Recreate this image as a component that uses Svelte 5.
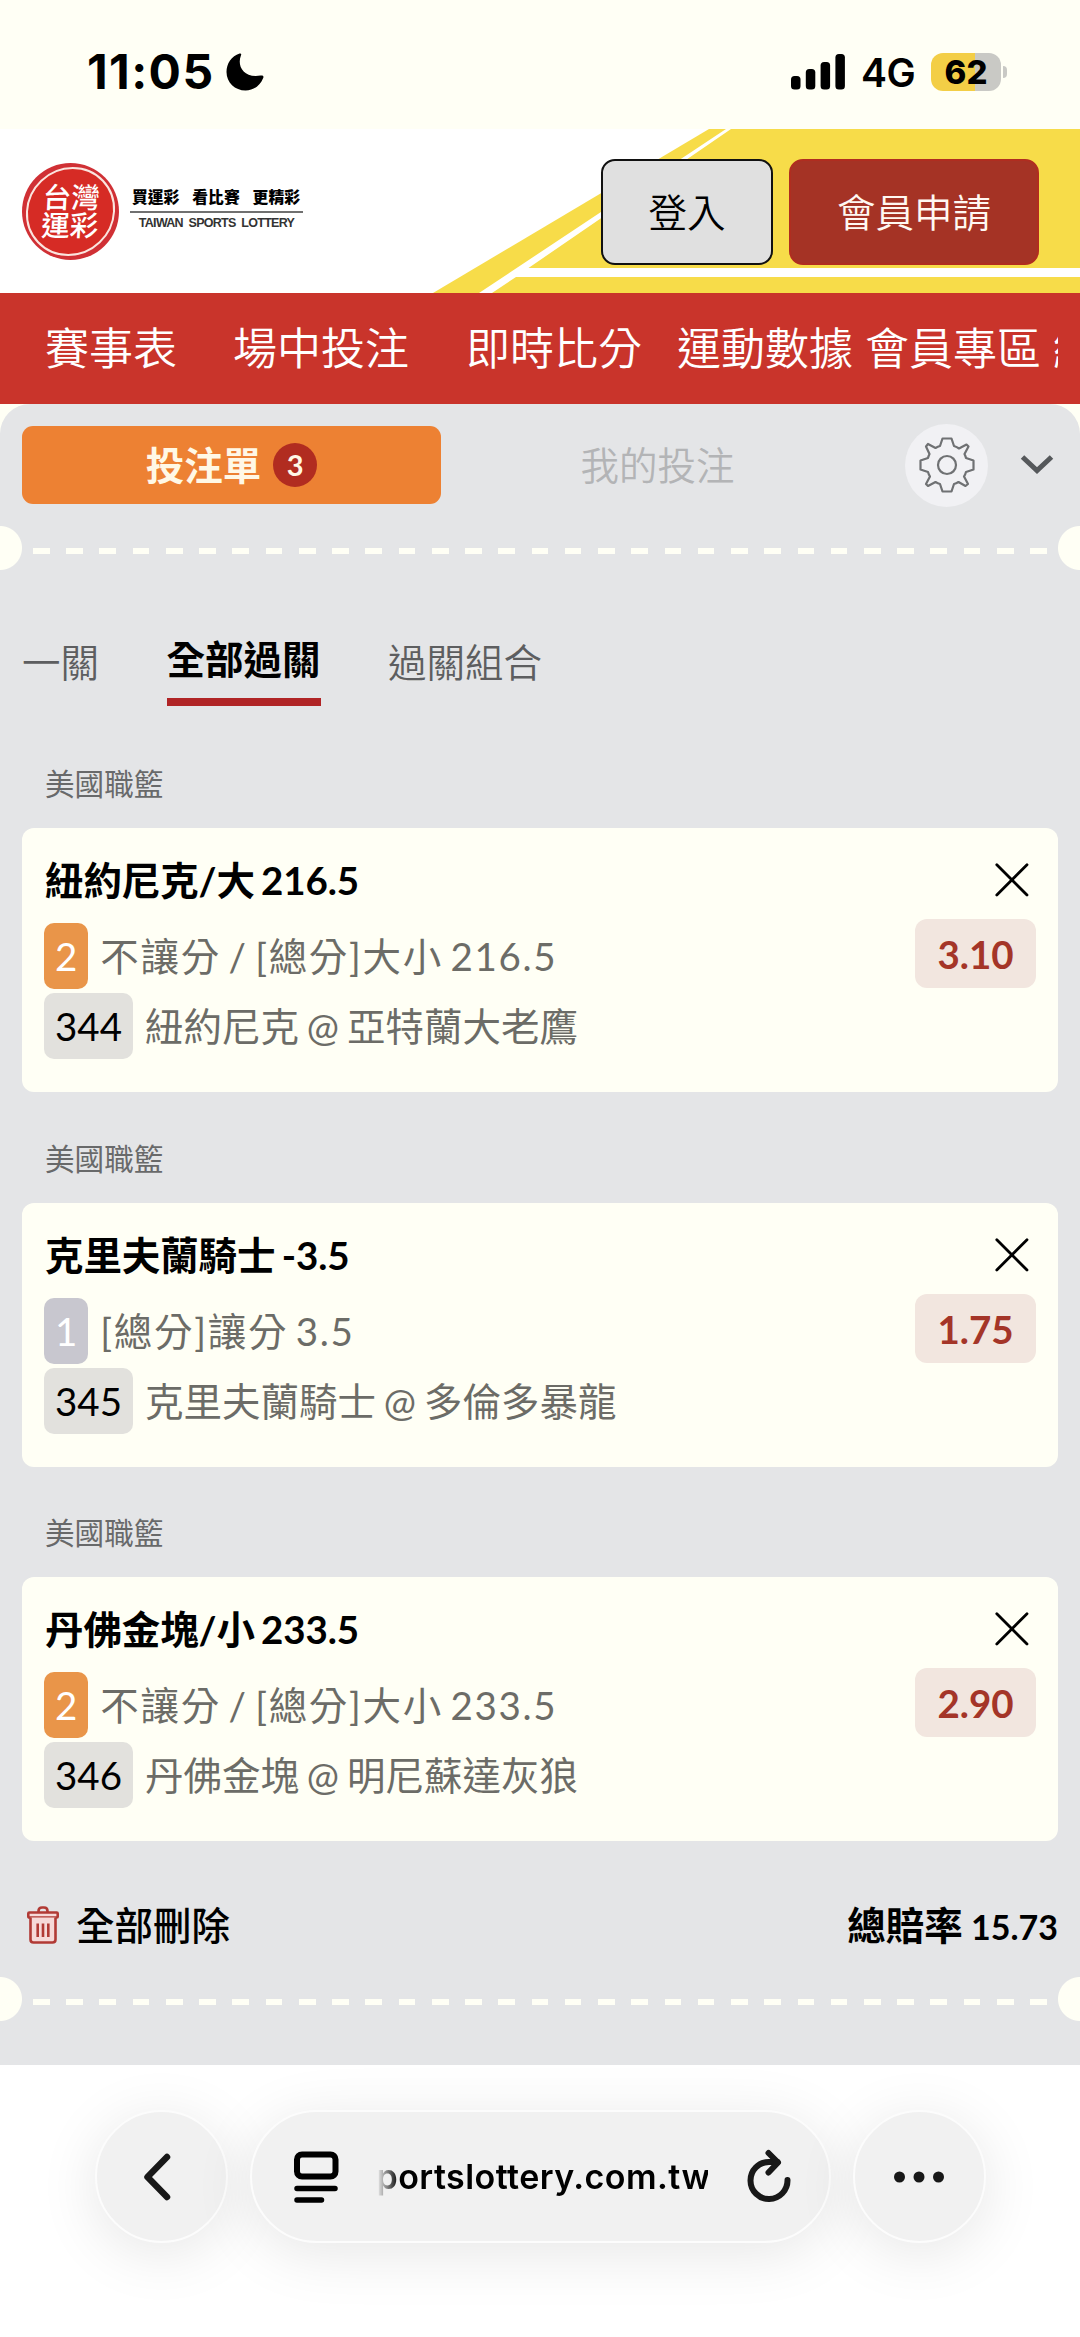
<script lang="ts">
    type Bet = {
        league: string;
        pick: string;
        min: number;
        market: string;
        code: string;
        match: string;
        odds: string;
    };

    const navItems = [
        { label: '賽事表', gap: 56 },
        { label: '場中投注', gap: 57 },
        { label: '即時比分', gap: 35 },
        { label: '運動數據', gap: 12 },
        { label: '會員專區', gap: 12 },
        { label: '經銷商', gap: 0 }
    ];

    const modes = ['一關', '全部過關', '過關組合'];
    let activeMode = '全部過關';

    let bets: Bet[] = [
        {
            league: '美國職籃',
            pick: '紐約尼克/大 216.5',
            min: 2,
            market: '不讓分 / [總分]大小 216.5',
            code: '344',
            match: '紐約尼克 @ 亞特蘭大老鷹',
            odds: '3.10'
        },
        {
            league: '美國職籃',
            pick: '克里夫蘭騎士 -3.5',
            min: 1,
            market: '[總分]讓分 3.5',
            code: '345',
            match: '克里夫蘭騎士 @ 多倫多暴龍',
            odds: '1.75'
        },
        {
            league: '美國職籃',
            pick: '丹佛金塊/小 233.5',
            min: 2,
            market: '不讓分 / [總分]大小 233.5',
            code: '346',
            match: '丹佛金塊 @ 明尼蘇達灰狼',
            odds: '2.90'
        }
    ];

    $: total = bets.reduce((sum, bet) => sum * Number(bet.odds), 1);
    // payout odds are cut off, never rounded up
    $: totalText = (Math.floor(total * 100) / 100).toFixed(2);

    function removeBet(code: string) {
        bets = bets.filter((bet) => bet.code !== code);
    }
</script>

<div class="screen">
    <div class="status-bar">
        <div class="status-left">
            <span class="clock">11:05</span>
            <svg width="38" height="38" viewBox="0 0 38 38">
                <path d="M13.6 .5C15 .2 15.6 1 15 2.2C10.800 12.500 17 25.500 34.500 22.600C37 22 38 23.200 37.200 25C34 33 27.500 37.500 19.600 37.500C9 37.500 .500 29.500 .500 19C.500 10.500 5.500 3.200 13.600 .500Z" />
            </svg>
        </div>
        <div class="status-right">
            <svg width="54" height="36" viewBox="0 0 54 36">
                <rect x="0" y="22" width="9.500" height="13.500" rx="3.500" />
                <rect x="14.800" y="15" width="9.500" height="20.500" rx="3.500" />
                <rect x="29.600" y="8" width="9.500" height="27.500" rx="3.500" />
                <rect x="44.400" y="0" width="9.500" height="35.500" rx="3.500" />
            </svg>
            <span class="network">4G</span>
            <div class="battery">62</div>
            <div class="battery-cap"></div>
        </div>
    </div>

    <header class="site-header">
        <svg class="header-art" width="1080" height="164" viewBox="0 0 1080 164">
            <path d="M433 164L709 0H1080V164Z" fill="#f7dc49" />
            <path d="M479 164L726 0H731L528.500 139H1080V148H516L492 164Z" fill="#fff" />
        </svg>
        <div class="brand">
            <div class="seal"><div class="seal-text">台灣<br />運彩</div></div>
            <div class="slogan">
                <div class="slogan-zh"><span>買運彩</span><span>看比賽</span><span>更精彩</span></div>
                <div class="slogan-en">TAIWAN&nbsp; SPORTS&nbsp; LOTTERY</div>
            </div>
        </div>
        <div class="account">
            <button class="login">登入</button>
            <button class="register">會員申請</button>
        </div>
    </header>

    <nav class="main-nav">
        <div class="nav-scroll">
            {#each navItems as item}
                <span style="margin-right: {item.gap}px">{item.label}</span>
            {/each}
        </div>
    </nav>

    <main class="slip">
        <div class="slip-head">
            <button class="slip-tab active"><span class="tab-label">投注單</span> <span class="count">{bets.length}</span></button>
            <button class="slip-tab"><span class="tab-label">我的投注</span></button>
            <button class="settings" aria-label="設定">
                <svg width="58" height="58" viewBox="-29 -29 58 58" fill="none" stroke="#6f7173" stroke-width="2.200" stroke-linejoin="round">
                    <path d="M-4.500 -26.500H4.500L7 -19Q10 -18 12 -16.500L19.500 -20.500L21.500 -18.500L17.500 -11Q18.500 -9 19 -7L26.500 -4.500V4.500L19 7Q18.500 9 17 11.500L21 19L18.500 21L11.500 17Q9 18.500 7 19L4.500 26.500H-4.500L-7 19Q-9 18.500 -11.500 17L-19 21L-21 19L-17 11.500Q-18.500 9 -19 7L-26.500 4.500V-4.500L-19 -7Q-18.500 -9 -17.500 -11L-21 -18.500L-19 -21L-11.500 -17Q-9 -18.500 -7 -19Z" />
                    <circle r="9" />
                </svg>
            </button>
            <button class="collapse" aria-label="收合">
                <svg width="34" height="22" viewBox="0 0 34 22" fill="none" stroke="#55585b" stroke-width="5">
                    <path d="M2.500 3L17 16.500L31.500 3" />
                </svg>
            </button>
        </div>

        <div class="tear"><div class="dashes"></div></div>

        <div class="modes">
            {#each modes as mode}
                <button class="mode" class:active={mode === activeMode} on:click={() => (activeMode = mode)}>{mode}</button>
            {/each}
        </div>

        {#each bets as bet (bet.code)}
            <section class="bet">
                <div class="league">{bet.league}</div>
                <div class="card">
                    <div class="bet-info">
                        <div class="pick">{bet.pick}</div>
                        <div class="line market">
                            <span class="tag" class:multi={bet.min > 1}>{bet.min}</span>
                            <span>{bet.market}</span>
                        </div>
                        <div class="line">
                            <span class="tag code">{bet.code}</span>
                            <span>{bet.match}</span>
                        </div>
                    </div>
                    <div class="bet-side">
                        <button class="remove" on:click={() => removeBet(bet.code)} aria-label="刪除">
                            <svg width="34" height="34" viewBox="0 0 34 34" stroke="#000" stroke-width="2.800" stroke-linecap="round">
                                <path d="M1.800 1.800L32 32M32 1.800L1.800 32" />
                            </svg>
                        </button>
                        <div class="odds">{bet.odds}</div>
                    </div>
                </div>
            </section>
        {/each}

        <div class="slip-foot">
            <button class="clear" on:click={() => (bets = [])}>
                <svg class="trash" width="32" height="38" viewBox="0 0 32 38" fill="none" stroke="#b13a35" stroke-width="2.600">
                    <path d="M11.500 6.500V5Q11.500 1.500 15 1.500H17Q20.500 1.500 20.500 5V6.500" />
                    <rect x="1.300" y="6.500" width="29.400" height="5" rx="1" fill="#f6d9d8" />
                    <path d="M3.500 11.500V33.500Q3.500 36.500 6.500 36.500H25.500Q28.500 36.500 28.500 33.500V11.500" fill="#f6d9d8" />
                    <path d="M10.700 17.500V31M16 17.500V31M21.300 17.500V31" />
                </svg>
                全部刪除
            </button>
            <div class="total">總賠率 <span>{totalText}</span></div>
        </div>

        <div class="tear"><div class="dashes"></div></div>
    </main>

    <footer class="browser-bar">
        <button class="round back" aria-label="Back">
            <svg width="30" height="50" viewBox="0 0 30 50" fill="none" stroke="#181818" stroke-width="6.500" stroke-linecap="round" stroke-linejoin="round">
                <path d="M24 5L4.500 25L24 45" />
            </svg>
        </button>
        <div class="address">
            <svg width="46" height="54" viewBox="0 0 46 54" fill="none" stroke="#000" stroke-width="6" stroke-linecap="round">
                <rect x="4" y="4.500" width="38.500" height="22" rx="5" />
                <path d="M4 38.500H42M4 50H28.500" stroke-width="5.500" />
            </svg>
            <div class="url">portslottery.com.tw</div>
            <svg width="46" height="56" viewBox="0 0 46 56" fill="none" stroke="#181818" stroke-width="6" stroke-linecap="round" stroke-linejoin="round">
                <path d="M41.500 31A18.500 18.500 0 1 1 23 13H31.500" />
                <path d="M22.500 4L32 13.500L22.500 23.500" />
            </svg>
        </div>
        <button class="round" aria-label="More">
            <svg width="52" height="12" viewBox="0 0 52 12" fill="#181818">
                <circle cx="6.500" cy="6" r="5.500" />
                <circle cx="26" cy="6" r="5.500" />
                <circle cx="45.500" cy="6" r="5.500" />
            </svg>
        </button>
    </footer>
</div>

<style>
    :global(body) {
        margin: 0;
        background: #fffff5;
    }

    .screen {
        width: 1080px;
        height: 2337px;
        display: flex;
        flex-direction: column;
        overflow: hidden;
        background: #fffff5;
        color: #000;
        font-family: Lato, "Noto Sans CJK TC", sans-serif;
        font-size: 38.5px;
    }

    button {
        padding: 0;
        border: none;
        background: none;
        color: inherit;
        font: inherit;
        cursor: pointer;
    }

    svg {
        display: block;
        flex: none;
    }

    .status-bar {
        height: 129px;
        flex: none;
        display: flex;
        justify-content: space-between;
        box-sizing: border-box;
        padding: 14px 73px 0 87px;
        font-family: Inter, sans-serif;
    }

    .status-left,
    .status-right {
        display: flex;
        align-items: center;
    }

    .clock {
        width: 139px;
        font-size: 48px;
        font-weight: 750;
        letter-spacing: 1.400px;
    }

    .network {
        width: 70px;
        margin-left: 16px;
        font-size: 39px;
        font-weight: 600;
        letter-spacing: -0.500px;
        line-height: 40px;
        padding-top: 3px;
    }

    .battery {
        width: 70px;
        height: 38px;
        border-radius: 12px;
        background: linear-gradient(90deg, #f3ce46 63%, #c9c9c5 63%);
        font-size: 33px;
        font-weight: 800;
        line-height: 39px;
        text-align: center;
    }

    .battery-cap {
        width: 4px;
        height: 12px;
        margin-left: 2px;
        border-radius: 0 6px 6px 0;
        background: #c9c9c5;
    }

    .site-header {
        position: relative;
        height: 164px;
        flex: none;
        display: flex;
        justify-content: space-between;
        box-sizing: border-box;
        padding: 30px 41px 0 22px;
        background: #fff;
    }

    .header-art {
        position: absolute;
        inset: 0;
    }

    .brand {
        display: flex;
        padding-top: 4px;
    }

    .seal {
        width: 97px;
        height: 97px;
        box-sizing: border-box;
        padding: 4px;
        border-radius: 50%;
        background: #d03035;
    }

    .seal-text {
        height: 100%;
        box-sizing: border-box;
        padding-top: 14px;
        border: 2px solid #fbe5df;
        border-radius: 50%;
        background: #d62b25;
        color: #fff;
        font-size: 28.500px;
        font-weight: 500;
        line-height: 28px;
        text-align: center;
        transform: skewX(-3deg);
    }

    .slogan {
        width: 173px;
        margin-left: 11px;
        padding-top: 23px;
    }

    .slogan-zh {
        display: flex;
        justify-content: space-between;
        padding: 0 3px 3px 2px;
        border-bottom: 2px solid #707070;
        font-size: 15.800px;
        font-weight: 900;
        line-height: 22px;
    }

    .slogan-en {
        padding-top: 3px;
        color: #333;
        font-family: "Liberation Sans", Arial, sans-serif;
        font-size: 12.500px;
        font-weight: 700;
        letter-spacing: -0.700px;
        line-height: 14px;
        text-align: center;
        white-space: nowrap;
    }

    .account {
        position: relative;
        display: flex;
        gap: 16px;
        height: 106px;
    }

    .login,
    .register {
        box-sizing: border-box;
        padding-bottom: 5px;
        border-radius: 14px;
        font-weight: 350;
    }

    .login {
        width: 172px;
        border: 2.500px solid #111;
        background: #e0e0e0;
    }

    .register {
        width: 250px;
        border: 2px solid #b02d20;
        background: #a53325;
        color: #fff8f2;
    }

    .main-nav {
        height: 111px;
        flex: none;
        padding: 0 22px 0 45px;
        background: #c9342b;
        color: #fff;
        font-size: 44px;
        font-weight: 350;
        line-height: 111px;
    }

    .nav-scroll {
        display: flex;
        overflow: hidden;
        white-space: nowrap;
    }

    .slip {
        height: 1661px;
        flex: none;
        border-radius: 30px 30px 0 0;
        background: #e4e5e7;
    }

    .slip-head {
        height: 122px;
        display: flex;
        align-items: center;
        padding: 0 26px 0 22px;
    }

    .slip-tab {
        width: 419px;
        height: 78px;
        display: flex;
        align-items: center;
        justify-content: center;
        border-radius: 11px;
        color: #b3b4b6;
        font-weight: 350;
    }

    .slip-tab + .slip-tab {
        width: 433px;
    }

    .slip-tab.active {
        gap: 12px;
        background: #ed8133;
        color: #fff8e6;
        font-weight: 700;
    }

    .tab-label {
        padding-bottom: 5px;
    }

    .count {
        width: 44px;
        height: 44px;
        border-radius: 50%;
        background: #b12c20;
        font-size: 29px;
        line-height: 44px;
        text-align: center;
    }

    .settings {
        width: 83px;
        height: 83px;
        display: grid;
        place-items: center;
        margin-left: 31px;
        border-radius: 50%;
        background: #f1f1f4;
    }

    .collapse {
        margin-left: auto;
    }

    .tear {
        height: 44px;
        padding: 22px 33px 0;
        box-sizing: border-box;
        background:
            radial-gradient(circle at 0 22px, #fffff5 21.500px, transparent 22.500px),
            radial-gradient(circle at 100% 22px, #fffff5 21.500px, transparent 22.500px);
    }

    .dashes {
        height: 6px;
        background: repeating-linear-gradient(90deg, #fffff5 0 16.620px, transparent 16.620px 33.240px);
    }

    .modes {
        display: flex;
        align-items: flex-start;
        gap: 67.500px;
        height: 147.500px;
        padding: 52px 22px 0;
        box-sizing: border-box;
    }

    .mode {
        height: 84px;
        box-sizing: border-box;
        padding-top: 4px;
        border-bottom: 8px solid transparent;
        color: #5d5e60;
        font-weight: 350;
        line-height: 56px;
    }

    .mode.active {
        padding: 0 0 2px;
        border-color: #b02426;
        color: #000;
        font-weight: 700;
    }

    .bet {
        padding: 0 22px;
    }

    .league {
        height: 110.500px;
        box-sizing: border-box;
        padding: 48.500px 23px 0;
        color: #68696a;
        font-size: 29.600px;
        line-height: 36px;
    }

    .card {
        height: 264px;
        display: flex;
        justify-content: space-between;
        box-sizing: border-box;
        padding: 22px 22px 0;
        border-radius: 12px;
        background: #fffff5;
    }

    .pick {
        height: 73px;
        padding-left: 1px;
        font-weight: 700;
        letter-spacing: -0.100px;
        line-height: 60px;
        word-spacing: -3px;
    }

    .line {
        display: flex;
        gap: 12px;
        margin-bottom: 4px;
        color: #6c6c67;
        line-height: 66px;
        white-space: pre;
        word-spacing: -2px;
    }

    .market {
        letter-spacing: 1.700px;
        word-spacing: -4px;
    }

    .tag {
        height: 66px;
        box-sizing: border-box;
        padding: 0 11px;
        border-radius: 10px;
        background: #c8c7cf;
        color: #fff;
        letter-spacing: 0;
    }

    .tag.multi {
        background: #e99549;
    }

    .tag.code {
        background: #e2e1dd;
        color: #000;
    }

    .bet-side {
        display: flex;
        flex-direction: column;
        align-items: flex-end;
        padding-top: 13px;
    }

    .remove {
        margin-right: 7px;
    }

    .odds {
        width: 121px;
        height: 69px;
        margin-top: 22px;
        border-radius: 12px;
        background: #f2e6df;
        color: #a43528;
        font-size: 38.500px;
        font-weight: 700;
        line-height: 70px;
        text-align: center;
    }

    .slip-foot {
        display: flex;
        align-items: center;
        justify-content: space-between;
        height: 136px;
        box-sizing: border-box;
        padding: 27px 22px 0 27px;
    }

    .clear {
        display: flex;
        align-items: center;
        gap: 17px;
        font-weight: 500;
    }

    .trash {
        margin-top: 4px;
    }

    .total {
        font-weight: 700;
        word-spacing: -1px;
    }

    .total span {
        font-size: 34px;
    }

    .browser-bar {
        flex: 1;
        display: flex;
        justify-content: center;
        gap: 22px;
        padding-top: 45px;
        background: #fff;
    }

    .round,
    .address {
        height: 133px;
        box-sizing: border-box;
        border: 2px solid #fcfcfc;
        border-radius: 67px;
        background: #f1f1f1;
        box-shadow: 0 10px 60px rgba(0, 0, 0, 0.1);
    }

    .round {
        width: 133px;
        display: grid;
        place-items: center;
    }

    .back {
        padding-right: 7px;
    }

    .address {
        width: 581px;
        display: flex;
        align-items: center;
        padding: 0 37px 0 41px;
    }

    .url {
        width: 331px;
        margin: 0 auto;
        font-family: Inter, sans-serif;
        font-size: 34px;
        font-weight: 600;
        letter-spacing: 0.450px;
        line-height: 50px;
        text-align: right;
        white-space: nowrap;
        mask-image: linear-gradient(90deg, transparent, #000 22px);
    }
</style>
